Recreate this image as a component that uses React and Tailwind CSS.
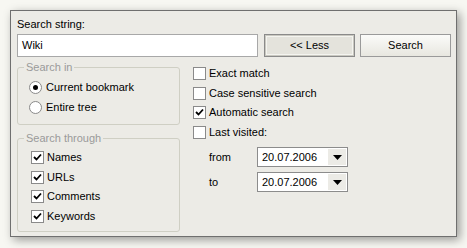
import React from "react";

const font = { fontFamily: '"Liberation Sans", Arial, sans-serif' };

function Check({ checked }) {
  return (
    <span className="flex h-[13px] w-[13px] shrink-0 items-center justify-center border border-[#8a8a8a] bg-white">
      {checked && (
        <svg width="9" height="9" viewBox="0 0 9 9">
          <path d="M1 4 L3.5 6.5 L8 1.5" stroke="#000" strokeWidth="1.8" fill="none" />
        </svg>
      )}
    </span>
  );
}

function Radio({ checked }) {
  return (
    <span className="flex h-[13px] w-[13px] shrink-0 items-center justify-center rounded-full border border-[#8a8a8a] bg-white">
      {checked && <span className="h-[5px] w-[5px] rounded-full bg-black" />}
    </span>
  );
}

function DateBox({ value }) {
  return (
    <div className="flex h-[20px] w-[91px] items-center border border-[#8c8c8c] bg-white">
      <span className="flex-1 pl-[4px] text-[11px] leading-[13px] text-black">{value}</span>
      <span className="mr-[1px] flex h-[16px] w-[18px] items-center justify-center bg-[#ecebe6]">
        <svg width="9" height="5" viewBox="0 0 9 5">
          <path d="M0 0 H9 L4.5 5 Z" fill="#000" />
        </svg>
      </span>
    </div>
  );
}

export default function App() {
  return (
    <div className="h-[248px] w-[467px] bg-[#f7f7f2] pl-[10px] pt-[10px]" style={font}>
      <div className="flex h-[227px] w-[447px] flex-col border border-[#6f6f6f] bg-[#ecebe6] pl-[6px] pt-[7px] text-[11px] leading-[13px] text-black shadow-[3px_3px_9px_rgba(0,0,0,0.38)]">
        <div className="h-[13px]">Search string:</div>
        <div className="mt-[3px] flex h-[23px] items-stretch">
          <div className="flex w-[241px] items-center border border-[#a8a8a8] bg-white pl-[4px]">Wiki</div>
          <button className="ml-[6px] flex w-[91px] items-center justify-center border border-[#8a8a8a] bg-[#e4e3dc] shadow-[inset_0_0_0_1px_#c9c8c0,inset_0_0_0_2px_#f4f4f0]">
            &lt;&lt; Less
          </button>
          <button className="ml-[5px] flex w-[91px] items-center justify-center border border-[#9a9a9a] bg-gradient-to-b from-[#fbfbf9] to-[#e8e7e0]">
            Search
          </button>
        </div>
        <div className="flex">
          <div className="flex w-[163px] flex-col">
            <fieldset className="mt-[4px] h-[64px] rounded-[3px] border border-[#cfcfc4]">
              <legend className="ml-[6px] px-[2px] text-[#9a9a9a]">Search in</legend>
              <div className="pl-[11px] pt-[3px]">
                <div className="flex h-[20px] items-center gap-[4px]">
                  <Radio checked />
                  <span>Current bookmark</span>
                </div>
                <div className="flex h-[20px] items-center gap-[4px]">
                  <Radio />
                  <span>Entire tree</span>
                </div>
              </div>
            </fieldset>
            <fieldset className="mt-[7px] h-[100px] rounded-[3px] border border-[#cfcfc4]">
              <legend className="ml-[6px] px-[2px] text-[#9a9a9a]">Search through</legend>
              <div className="pl-[13px] pt-[3px]">
                {["Names", "URLs", "Comments", "Keywords"].map((t) => (
                  <div key={t} className="flex h-[19.5px] items-center gap-[3px]">
                    <Check checked />
                    <span>{t}</span>
                  </div>
                ))}
              </div>
            </fieldset>
          </div>
          <div className="ml-[13px] flex flex-col pt-[7px]">
            {[
              ["Exact match", false],
              ["Case sensitive search", false],
              ["Automatic search", true],
              ["Last visited:", false],
            ].map(([t, c]) => (
              <div key={t} className="flex h-[19.5px] items-center gap-[3px]">
                <Check checked={c} />
                <span>{t}</span>
              </div>
            ))}
            <div className="mt-[5px] flex items-center pl-[16px]">
              <span className="w-[48px]">from</span>
              <DateBox value="20.07.2006" />
            </div>
            <div className="mt-[5px] flex items-center pl-[16px]">
              <span className="w-[48px]">to</span>
              <DateBox value="20.07.2006" />
            </div>
          </div>
        </div>
      </div>
    </div>
  );
}
